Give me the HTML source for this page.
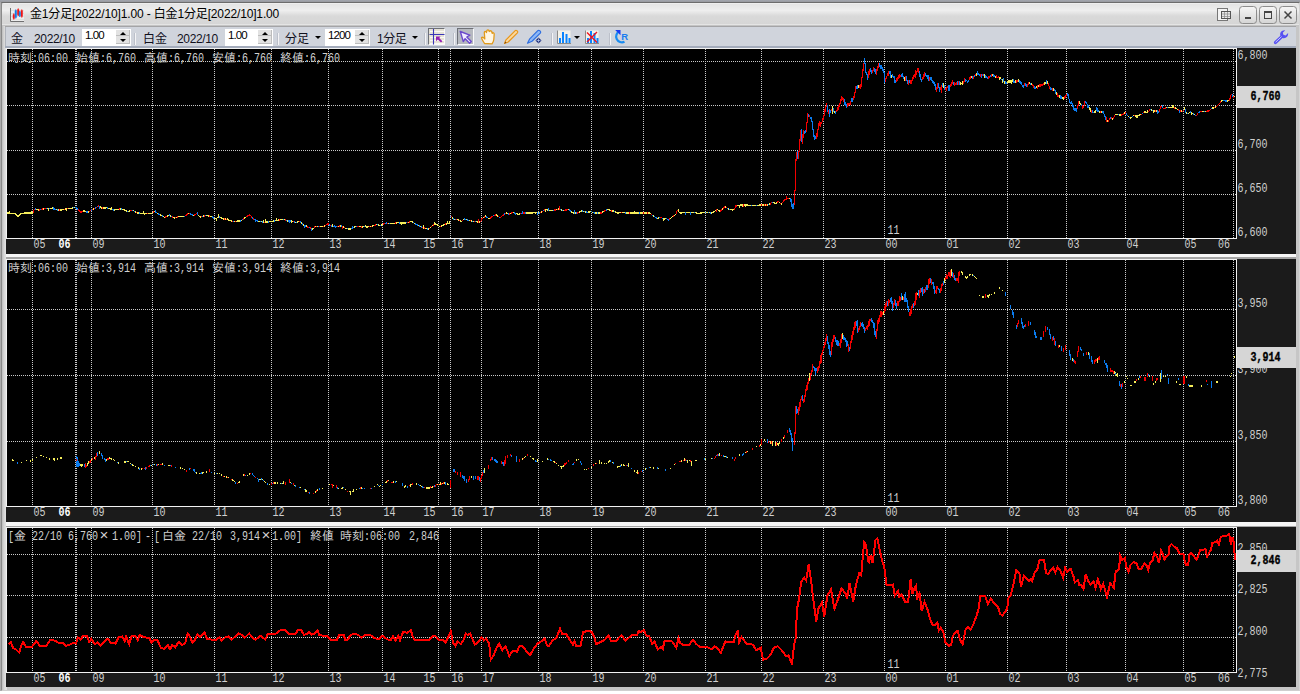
<!DOCTYPE html>
<html lang="ja">
<head>
<meta charset="utf-8">
<title>金1分足[2022/10]1.00 - 白金1分足[2022/10]1.00</title>
<style>
html,body{margin:0;padding:0}
body{width:1300px;height:694px;overflow:hidden;background:#fff;position:relative;font-family:"Liberation Sans","Noto Sans CJK JP",sans-serif;font-size:12px;color:#000}
.win{position:absolute;left:0;top:0;width:1300px;height:691px;background:linear-gradient(#a2a6ae,#9a9ca2 1.500px,#acacac 3px)}
.frame{position:absolute;left:1px;top:2px;width:1299px;height:689px;box-sizing:border-box;border:1px solid #8a8a8a;border-top-color:#6c6c6c;border-right-color:#d4d4d4;border-bottom-color:#cfcfcf;background:linear-gradient(90deg,#bcbcbc 0,#d6d6d6 2px,#e2e2e2 4px,#e2e2e2 5px,#c6c6c6 5px)}
.title{position:absolute;left:2px;top:3px;width:1297px;height:23px;background:linear-gradient(#f2f2f2 0,#e5e5e5 1.500px,#eeeeee 7.500px,#d9d9d9 13px,#d6d6d6 21px,#e4e4e4 21.500px,#e4e4e4 22px,#c4c4c4 22px);border-radius:2px 2px 0 0}
.title .cap{position:absolute;left:28px;top:4px;font-size:12px;line-height:15px;white-space:pre;color:#000;letter-spacing:-0.15px}
.tool{position:absolute;left:5px;top:26px;width:1291px;height:22px;background:#d0d4dc;border-top:1px solid #a4a4a6;box-shadow:inset 1px 0 0 #b0b4bc;box-sizing:border-box;border-bottom:2px solid #a3abbb}
.tool span,.tool i,.tool b{position:absolute}
.lb{top:5px;line-height:14px;font-size:12px;color:#10101c;white-space:pre}
.box{top:2px;height:17px;background:#fff}
.box em{position:absolute;left:3px;top:0;font-style:normal;font-size:11.5px;line-height:12px;color:#000;letter-spacing:-0.9px}
.sp{position:absolute;right:1px;top:1px;width:14px;height:15px}
.sp:before,.sp:after{content:"";position:absolute;left:0;width:14px;height:7px;background:#e2e2e2;box-shadow:inset -1px -1px 0 #bdbdbd}
.sp:before{top:0;height:6px}.sp:after{top:6px;height:8px}
.sp u{position:absolute;left:4px;width:0;height:0;border-left:3px solid transparent;border-right:3px solid transparent;z-index:2}
.sp u.u{top:1.500px;border-bottom:3px solid #000}
.sp u.d{top:8.500px;border-top:3px solid #000}
.sep{top:6px;width:1px;height:12px;background:#f4f4f6;box-shadow:-1px 0 0 #bcc0ca}
.dd{top:9px;width:0;height:0;border-left:3px solid transparent;border-right:3px solid transparent;border-top:3.500px solid #000}
.prs{top:1px;width:17px;height:17px;box-sizing:border-box;border:1px solid;border-color:#6e7178 #fafafa #fafafa #6e7178}
svg.ch{position:absolute;left:0;top:0}
svg.ic{position:absolute}
.t text{font-family:"Liberation Mono","IPAGothic",monospace;fill:#d0d0d0;white-space:pre}
.t .n{font-size:13px}
.t .j{font-size:12px}
.t .x{font-size:15px}
.t .b{font-weight:bold;fill:#fff}
.t .mk{font-size:13px;font-weight:bold;fill:#000;stroke:#000;stroke-width:.35px}
</style>
</head>
<body>
<div class="win"></div><div class="frame"></div>
<div class="title">
<svg class="ic" style="left:8px;top:5px" width="15" height="14" viewBox="0 0 15 14"><rect x="0.500" y="0" width="13.500" height="13.500" fill="#ececec"/><path d="M1 2.500H14M1 5.500H14M1 8.500H14M1 11.500H14" stroke="#dedede" stroke-width="1"/><path d="M0.500 0V13.500H14" stroke="#707070" fill="none"/><path d="M3.800 5.500L4.600 7V10L3.800 11.500L3 10V7ZM8.200 0.500L9 2V6.500L8.200 8L7.400 6.500V2ZM11.800 1.500L12.600 3V8L11.800 9.500L11 8V3Z" fill="#f01414" stroke="#f01414" stroke-width=".5"/><path d="M5.800 1.500L6.600 3V9L5.800 10.500L5 9V3ZM9.800 3L10.500 4.500V7.500L9.800 9L9.100 7.500V4.500Z" fill="#1478e6" stroke="#1478e6" stroke-width=".5"/></svg>
<span class="cap">金1分足[2022/10]1.00 - 白金1分足[2022/10]1.00</span>
<svg class="ic" style="left:1213px;top:3px" width="84" height="20" viewBox="0 0 84 20">
<rect x="2.5" y="2.500" width="10" height="12" fill="#f4f4f4" stroke="#777"/><rect x="6.500" y="5.500" width="9" height="7" fill="#e8e8e8" stroke="#555"/><path d="M7 8H15M7 10.500H15M9.500 6V12M12.500 6V12" stroke="#888" stroke-width=".7"/>
<g stroke="#8c8c8c" fill="url(#bg)"><rect x="24.500" y="0.500" width="17" height="17" rx="3"/><rect x="44.500" y="0.500" width="17" height="17" rx="3"/><rect x="64.500" y="0.500" width="17" height="17" rx="3"/></g>
<defs><linearGradient id="bg" x1="0" y1="0" x2="0" y2="1"><stop offset="0" stop-color="#f6f6f6"/><stop offset="1" stop-color="#d4d4d4"/></linearGradient></defs>
<path d="M30 12H36" stroke="#444" stroke-width="2"/><rect x="49.500" y="5.500" width="7" height="7" fill="none" stroke="#444"/><path d="M49 6H57" stroke="#444" stroke-width="2"/><path d="M69.500 5.500L76.500 12.500M76.500 5.500L69.500 12.500" stroke="#444" stroke-width="1.500"/>
</svg>
</div>
<div class="tool">
<span class="lb" style="left:6px">金</span><span class="lb" style="left:29px;letter-spacing:-0.35px">2022/10</span>
<span class="box" style="left:77px;width:49px"><em>1.00</em><i class="sp"><u class="u"></u><u class="d"></u></i></span>
<i class="sep" style="left:130px"></i>
<span class="lb" style="left:138px">白金</span><span class="lb" style="left:172px;letter-spacing:-0.35px">2022/10</span>
<span class="box" style="left:220px;width:48px"><em>1.00</em><i class="sp"><u class="u"></u><u class="d"></u></i></span>
<i class="sep" style="left:273px"></i>
<span class="lb" style="left:280px">分足</span><i class="dd" style="left:310px"></i>
<span class="box" style="left:320px;width:45px"><em>1200</em><i class="sp"><u class="u"></u><u class="d"></u></i></span>
<span class="lb" style="left:372px;letter-spacing:-0.5px">1分足</span><i class="dd" style="left:407px"></i>
<i class="sep" style="left:420px"></i>
<i class="prs" style="left:423px;background:#e6e2d6"></i>
<i class="sep" style="left:449px"></i>
<i class="prs" style="left:452px;background:#b6b9bf"></i>
<i class="sep" style="left:547px"></i>
<i class="dd" style="left:569px"></i>
<i class="sep" style="left:605px"></i>
<svg class="ic" style="left:420px;top:0" width="220" height="20" viewBox="425 27 220 20">
<!-- icon1 grid + arrow -->
<path d="M430 31.500H444M430 37.500H444M430 40.500H444M430 43.500H444" stroke="#fbfaf4" stroke-width="1"/>
<path d="M433.500 29V44.500M429.500 34.500H444.500" stroke="#3a36b8" stroke-width="1.100"/>
<path d="M436 36.600H440.600L439.200 38L442.400 41.200L441 42.600L437.800 39.400L436 41.200Z" fill="#9420b2"/>
<!-- icon2 pointer -->
<path d="M460.300 31.500L469.800 35.200L466.800 37L471.300 41.500L469.600 43.200L465.100 38.700L463.300 41.600Z" fill="#efeaff" stroke="#6a48cc" stroke-width="1.400" stroke-linejoin="round"/>
<!-- icon3 hand -->
<path d="M484.500 43.500C483 41 481.500 39 481.500 37.500C482.500 36.800 483.800 37.500 484.800 39L484.300 32.500C484.300 31 486.200 31 486.400 32.500L486.800 31C487 29.500 489 29.600 489 31.200L489.600 31.500C490 30.300 491.800 30.600 491.800 32L492.200 33.300C492.800 32.300 494.300 32.800 494.200 34.200L493.800 39.500C493.600 41.500 492.800 42.500 492 43.800Z" fill="#fff6e4" stroke="#e09a1c" stroke-width="1.300" stroke-linejoin="round"/>
<!-- icon4 pencil -->
<path d="M504.500 43.500L506 39.800L515.200 30.600C516.200 29.600 518.600 31.500 517.400 32.800L508.200 42Z" fill="#fbd9a0" stroke="#e8961a" stroke-width="1.200" stroke-linejoin="round"/><path d="M504.300 43.800L505.300 41.600L506.500 42.800Z" fill="#7a4a10"/>
<!-- icon5 pen -->
<path d="M527.500 43.200L529.500 39.200L537.800 30.700C539 29.500 541.600 31.700 540.300 33.100L532 41.300Z" fill="#8db8f6" stroke="#2f6fe0" stroke-width="1.200" stroke-linejoin="round"/><path d="M538.500 37.500L541.500 40.500L538.500 43.500L535.500 40.500Z" fill="#1a2a78"/><path d="M538.500 38.500V42.500M536.500 40.500H540.500" stroke="#cfe0ff" stroke-width=".6"/>
<!-- icon6 bars -->
<rect x="557.500" y="30.500" width="13" height="13" fill="#f3f1ea"/><path d="M557.500 30.500V43.500H571" stroke="#8a8a8a" fill="none"/><path d="M560 38V43M563 32V43M566.500 34V43M569.500 38V43" stroke="#0a84ff" stroke-width="2"/>
<!-- icon7 bars with X -->
<rect x="585.500" y="30.500" width="13" height="13" fill="#f3f1ea"/><path d="M585.500 30.500V43.500H599" stroke="#8a8a8a" fill="none"/><path d="M588 38V43M591 31V43M594.500 33V43M597.500 38V43" stroke="#0a84ff" stroke-width="2"/><path d="M587 32.500L597 42.500M597 32L587 42" stroke="#f01020" stroke-width="1.400"/>
<!-- icon8 refresh -->
<path d="M619.500 31.200A5.600 5.600 0 1 0 624.500 41.800" fill="none" stroke="#1a8cf0" stroke-width="2.200"/><path d="M615.200 30H620.500V35.300Z" fill="#1a3cf0"/>
<text x="621.200" y="40.300" font-family="Liberation Sans,sans-serif" font-weight="bold" font-size="9.500" fill="#1a7cf0">R</text>
</svg>
<svg class="ic" style="left:1267px;top:2px" width="18" height="17" viewBox="1272 29 18 17"><path d="M1274.200 41.400L1280.400 35.800C1279.400 32.800 1281.600 29.800 1285.200 30.200L1282.800 32.800L1283.400 34.800L1285.600 35.400L1288.100 33C1288.600 36.600 1285.400 39 1282.600 37.900L1276.400 43.800C1275 45 1273 43 1274.200 41.400Z" fill="#5650f2"/><path d="M1275.600 42.200L1281.600 36.600" stroke="#c8c6ff" stroke-width="1"/></svg>
</div>
<svg class="ch" width="1300" height="694" viewBox="0 0 1300 694">
<rect x="6" y="48" width="1290" height="639" fill="#f6f6f6"/>
<rect x="6" y="257" width="1290" height="2" fill="#a4a4a4"/><rect x="6" y="526" width="1290" height="1" fill="#a4a4a4"/>
<rect x="6" y="48" width="1290" height="206" fill="#1b1b1b"/>
<rect x="7" y="49" width="1229" height="189" fill="#000"/>
<path d="M6 48.5H1237M6.5 48V239M6 238.5H1237M1236.5 48V239" stroke="#f2f2f2" stroke-width="1" fill="none" shape-rendering="crispEdges"/>
<path d="M7 61.5H1236M7 105.5H1236M7 150.5H1236M7 194.5H1236M32.5 49V238M91.5 49V238M152.5 49V238M214.5 49V238M271.5 49V238M328.5 49V238M382.5 49V238M438.5 49V238M450.5 49V238M481.5 49V238M538.5 49V238M591.5 49V238M643.5 49V238M705.5 49V238M761.5 49V238M823.5 49V238M884.5 49V238M945.5 49V238M1007.5 49V238M1066.5 49V238M1125.5 49V238M1183.5 49V238M1233.5 49V238M75.5 49V238M76.5 49V238" stroke="#cacaca" stroke-width="1" stroke-dasharray="1 1" fill="none" shape-rendering="crispEdges"/>
<rect x="1237" y="86" width="59" height="22" fill="#d6d6d6"/>
<rect x="6" y="259" width="1290" height="263" fill="#1b1b1b"/>
<rect x="7" y="260" width="1229" height="246" fill="#000"/>
<path d="M6 259.5H1237M6.5 259V507M6 506.5H1237M1236.5 259V507" stroke="#f2f2f2" stroke-width="1" fill="none" shape-rendering="crispEdges"/>
<path d="M7 309.5H1236M7 375.5H1236M7 441.5H1236M32.5 260V506M91.5 260V506M152.5 260V506M214.5 260V506M271.5 260V506M328.5 260V506M382.5 260V506M438.5 260V506M450.5 260V506M481.5 260V506M538.5 260V506M591.5 260V506M643.5 260V506M705.5 260V506M761.5 260V506M823.5 260V506M884.5 260V506M945.5 260V506M1007.5 260V506M1066.5 260V506M1125.5 260V506M1183.5 260V506M1233.5 260V506M75.5 260V506M76.5 260V506" stroke="#cacaca" stroke-width="1" stroke-dasharray="1 1" fill="none" shape-rendering="crispEdges"/>
<rect x="1237" y="347" width="59" height="21" fill="#d6d6d6"/>
<rect x="6" y="527" width="1290" height="160" fill="#1b1b1b"/>
<rect x="7" y="528" width="1229" height="144" fill="#000"/>
<path d="M6 527.5H1237M6.5 527V673M6 672.5H1237M1236.5 527V673" stroke="#f2f2f2" stroke-width="1" fill="none" shape-rendering="crispEdges"/>
<path d="M7 554.5H1236M7 595.5H1236M7 637.5H1236M32.5 528V672M91.5 528V672M152.5 528V672M214.5 528V672M271.5 528V672M328.5 528V672M382.5 528V672M438.5 528V672M450.5 528V672M481.5 528V672M538.5 528V672M591.5 528V672M643.5 528V672M705.5 528V672M761.5 528V672M823.5 528V672M884.5 528V672M945.5 528V672M1007.5 528V672M1066.5 528V672M1125.5 528V672M1183.5 528V672M1233.5 528V672M75.5 528V672M76.5 528V672" stroke="#cacaca" stroke-width="1" stroke-dasharray="1 1" fill="none" shape-rendering="crispEdges"/>
<rect x="1237" y="550" width="59" height="22" fill="#d6d6d6"/>
<path d="M7.5 212.4V213.8M8.5 212.4V213.8M9.5 211.1V213.9M10.5 212.5V213.9M11.5 212.6V214M12.5 212.6V214M13.5 212.7V214.1M14.5 212.8V214.2M15.5 213.3V214.7M16.5 214.1V215.5M17.5 214.8V217.3M18.5 215.2V216.6M19.5 214.3V215.7M20.5 213.2V214.6M21.5 212.6V214M22.5 212.6V214M23.5 212.5V213.9M24.5 212.4V213.8M25.5 212.3V213.7M26.5 212.3V213.7M27.5 212.2V213.6M28.5 212.1V213.5M29.5 212.1V213.5M30.5 212.2V213.6M31.5 210.8V213.6M32.5 212.3V213.7M36.5 208.7V210.1M37.5 209V210.4M38.5 209.2V210.6M43.5 208.1V209.5M47.5 207.6V209M48.5 207.6V211.1M50.5 207.7V209.1M51.5 207.8V209.2M52.5 206.8V209.3M56.5 208.8V210.2M58.5 209.2V210.6M60.5 209.1V210.5M61.5 209.1V210.5M62.5 208.9V210.3M63.5 208.7V210.1M65.5 208.2V209.6M66.5 208.1V211M68.5 207.9V209.3M69.5 207.8V209.2M70.5 207.7V209.1M71.5 207.6V209M72.5 207.4V208.8M74.5 206.6V208M83.5 210.3V211.7M84.5 210.4V211.8M85.5 210.8V212.2M88.5 211.1V212.5M93.5 208.2V209.6M100.5 206.4V207.8M101.5 207.2V208.6M103.5 207.3V208.7M104.5 207.2V208.6M105.5 207.1V208.5M106.5 207V208.4M108.5 207.5V208.9M109.5 207.8V209.2M110.5 208.2V209.6M111.5 207.1V209.9M114.5 209.2V210.6M115.5 209V210.4M116.5 208.9V210.3M117.5 208.7V210.1M118.5 208.6V210M120.5 208.3V209.7M122.5 208.5V209.9M123.5 209V210.4M124.5 209.4V210.8M125.5 209.8V211.2M126.5 210.3V211.7M128.5 210.5V211.9M129.5 210.2V211.6M133.5 210V211.4M135.5 211.2V212.6M137.5 212.2V213.6M138.5 212.3V213.7M140.5 212.6V214M141.5 212.7V214.1M142.5 212.8V214.2M143.5 211.4V214.4M144.5 213.1V214.5M145.5 213V214.4M146.5 212.9V214.3M148.5 212.7V214.1M149.5 212.7V214.1M150.5 212.6V214M151.5 212.5V213.9M152.5 212V213.4M154.5 210.9V212.3M157.5 212.5V213.9M160.5 214.2V215.6M161.5 214.8V216.2M163.5 216V217.4M164.5 216.5V217.9M167.5 215.4V216.8M168.5 215V216.4M170.5 215.3V216.7M173.5 216.8V218.2M174.5 217.1V218.5M176.5 216.6V218M178.5 215.8V217.2M179.5 215.5V216.9M180.5 215.6V217M181.5 215.6V217M182.5 215.7V217.1M183.5 215.7V217.1M188.5 212.6V214M193.5 214.5V215.9M198.5 214.5V215.8M199.5 215.6V217M200.5 216.1V217.5M203.5 215.4V216.8M206.5 214.8V216.2M207.5 214.9V216.3M208.5 215.1V216.5M210.5 215.5V216.9M211.5 215.9V217.3M214.5 217.7V219.1M215.5 218V219.4M216.5 217.5V220.8M217.5 216.9V218.3M218.5 214.4V217.6M220.5 216.6V218M221.5 217.3V218.7M222.5 217.9V219.3M223.5 218.3V219.7M225.5 217.5V219.9M227.5 217.9V220.2M228.5 219.1V220.5M229.5 219.5V220.9M230.5 219.9V221.3M231.5 220.2V221.6M234.5 220.7V222.1M236.5 220.5V221.9M237.5 220.4V221.8M238.5 220.3V221.7M239.5 220.2V221.6M241.5 219.6V221M244.5 216.6V218.8M245.5 216.7V218.1M258.5 220.5V221.9M259.5 220.6V222M261.5 221V222.4M263.5 219.6V222.8M265.5 219.4V222.9M266.5 221.4V222.8M267.5 221.3V222.7M269.5 221V222.4M270.5 220.9V222.3M271.5 220.8V222.2M272.5 220.6V222M273.5 220.4V221.8M275.5 219.9V221.3M276.5 218.4V221.1M277.5 219.5V220.9M278.5 219.3V220.7M280.5 219V220.4M281.5 218.8V220.2M282.5 218.7V220.1M284.5 218.8V220.2M287.5 220.1V221.5M291.5 220.4V223.2M292.5 220.6V222M295.5 221.5V222.9M297.5 221.2V222.6M298.5 220.9V222.3M301.5 222.2V223.6M303.5 224.3V225.7M306.5 224.5V227.1M312.5 228.3V229.7M313.5 228V229.4M315.5 226V227.4M317.5 225.6V227M320.5 225.8V227.2M321.5 225.8V227.2M322.5 225.9V227.3M324.5 225.1V226.5M332.5 223.7V226.8M338.5 225.5V226.9M340.5 225.1V226.5M343.5 225.6V227.9M345.5 227.5V228.9M346.5 227.9V229.3M348.5 228.2V229.6M349.5 228.3V229.7M350.5 228.4V229.8M354.5 226.1V227.5M355.5 226V227.4M359.5 225.6V227M360.5 225.5V226.9M362.5 225.7V228M363.5 225.8V227.2M365.5 225.1V227.4M366.5 226.1V227.5M367.5 226.2V227.6M368.5 226V227.4M370.5 225.6V227M372.5 225.3V226.7M373.5 225V226.4M376.5 223.7V225.1M378.5 224.2V225.6M379.5 224.8V226.1M381.5 224.3V225.7M382.5 223.9V225.3M388.5 222.6V224M390.5 222.8V224.2M391.5 222.9V224.3M392.5 223V224.4M393.5 223V224.4M394.5 222.8V224.2M396.5 222.1V223.5M397.5 221.8V223.2M398.5 221.8V223.2M400.5 222.3V223.7M401.5 222.2V224.7M402.5 222.2V223.6M403.5 222.2V223.6M404.5 222.2V223.6M405.5 222.1V223.5M408.5 221.5V222.9M410.5 221V222.4M411.5 220.9V222.3M412.5 221.4V222.8M414.5 222.5V223.9M418.5 224.7V226.1M420.5 225.7V227.1M423.5 225V228.5M425.5 227.7V229.1M426.5 228V229.4M428.5 228.2V229.6M430.5 226.5V227.9M432.5 225V226.4M434.5 221.9V225.3M435.5 223.4V224.8M436.5 223.5V224.8M437.5 224.2V225.5M438.5 224.9V226.2M439.5 225.6V226.9M441.5 225.2V226.6M442.5 224.7V226.1M443.5 224.3V225.7M444.5 223.8V225.2M446.5 223.1V224.5M447.5 221.3V224.4M448.5 222.9V224.3M449.5 221.4V224.3M452.5 217.1V218.5M454.5 218.6V220M457.5 218.9V220.3M458.5 219.2V220.6M460.5 220.3V221.7M461.5 220.5V221.9M463.5 218.7V220.1M466.5 219V220.4M469.5 219.7V221.1M471.5 220.2V221.6M473.5 220.7V222.1M476.5 221V222.4M477.5 221.1V222.5M479.5 221.3V222.7M483.5 216.8V218.2M485.5 215.2V217.4M488.5 217.7V219.1M489.5 217.8V219.2M496.5 214.3V215.7M497.5 215.1V216.5M506.5 212.3V213.7M507.5 212.8V214.2M510.5 212.8V214.2M513.5 212V213.4M516.5 213V214.4M517.5 213.3V214.7M518.5 213.5V214.9M519.5 213.3V214.7M526.5 212.2V213.6M527.5 212.2V213.6M528.5 212.2V213.6M529.5 212.3V213.7M530.5 212.3V213.7M531.5 212.2V213.6M532.5 212.1V213.5M533.5 212V213.4M534.5 211.9V213.3M535.5 211.8V214.1M536.5 211.7V213.1M538.5 212V213.3M541.5 211.2V212.6M545.5 208.7V212M546.5 209V210.4M547.5 209.4V210.8M549.5 210V211.4M550.5 209.9V211.3M551.5 209.8V211.2M552.5 209.7V211.1M556.5 208.9V210.3M558.5 208.1V209.5M561.5 209.2V210.6M563.5 210V211.4M568.5 208.7V210.1M571.5 211.3V212.7M572.5 212V213.4M573.5 212.2V213.6M575.5 212.2V213.6M579.5 211.1V212.5M580.5 210.6V212M581.5 210.2V211.6M583.5 210.6V212M585.5 211.1V212.5M588.5 211.4V212.8M589.5 211.2V212.6M590.5 211V212.4M592.5 211.5V212.9M595.5 212.3V213.7M596.5 212.3V213.7M598.5 212.3V213.7M599.5 212.3V213.7M602.5 211.1V212.5M603.5 210.6V212M607.5 208.9V210.3M608.5 208.7V210.1M609.5 209.2V210.6M610.5 209.8V211.2M612.5 210.3V211.7M613.5 210.4V211.8M615.5 211.2V212.6M616.5 211.9V213.3M617.5 212.2V213.6M618.5 212.1V213.5M619.5 211.9V213.3M620.5 211.8V213.2M622.5 211.7V213.1M623.5 211.9V213.3M624.5 212V213.4M626.5 212.2V213.6M627.5 212.3V213.7M628.5 212.3V213.7M630.5 212.3V213.7M631.5 212.3V213.7M632.5 212.3V213.7M633.5 212.3V213.7M634.5 211.1V213.7M635.5 212.3V213.7M636.5 212.3V213.7M637.5 212.3V213.7M638.5 212.3V213.7M640.5 212.3V213.7M641.5 212.3V213.7M642.5 212.3V213.7M644.5 212.3V213.7M645.5 212.3V213.7M646.5 212.3V213.7M648.5 212.3V213.7M649.5 212.3V213.7M650.5 212.8V214.2M653.5 215.4V216.8M657.5 217.5V218.9M658.5 217.4V218.8M663.5 218.4V220.6M664.5 218.1V219.5M665.5 217.5V218.9M670.5 217.5V218.9M671.5 216.5V217.9M672.5 215.7V217.1M674.5 214.5V215.9M675.5 213.9V215.3M678.5 209.1V212M679.5 211.7V213.1M680.5 212.2V213.6M681.5 212.1V213.5M682.5 212V213.4M683.5 211.9V213.3M684.5 211.8V213.2M686.5 211.6V213M687.5 211.6V213M688.5 211.6V213M689.5 211.6V213M691.5 211.6V213M692.5 211.6V213M693.5 211.6V213M695.5 212V213.4M696.5 212.2V213.6M697.5 212.5V213.9M698.5 212.6V214M699.5 212.5V213.9M700.5 212.3V213.7M701.5 212.2V213.6M702.5 212V213.4M703.5 211.8V213.2M704.5 211.7V213.1M706.5 211.8V213.2M707.5 211.9V213.3M709.5 212V213.4M711.5 212.2V213.6M712.5 212V213.4M713.5 211.3V212.7M714.5 210.5V211.9M715.5 209.7V211.1M717.5 208.9V210.3M718.5 209.7V211M719.5 210.4V211.8M722.5 208.1V209.5M725.5 206.4V207.8M728.5 208.1V209.5M730.5 208.6V210M731.5 208.8V210.1M732.5 208.9V211.1M733.5 208.8V210.2M737.5 204.7V206.1M738.5 204.6V206M739.5 204.5V207.6M740.5 204.4V205.8M741.5 204.3V205.7M742.5 204.2V206.5M744.5 204.3V205.7M745.5 204.3V207M746.5 204.4V205.8M747.5 204.4V205.8M748.5 204.5V205.9M749.5 204.5V205.9M750.5 204.5V205.9M752.5 204.6V206M753.5 204.7V206.1M754.5 204.7V206.1M755.5 204.6V206M757.5 204.5V205.9M758.5 204.5V205.9M759.5 204.4V205.8M760.5 204.4V205.8M762.5 204.3V205.7M763.5 204.3V205.7M765.5 204.3V205.7M767.5 204.2V205.6M769.5 203.1V204.5M773.5 201.9V203.3M774.5 202.4V203.8M775.5 202.6V204M776.5 202.1V203.5M779.5 201.7V203.1M781.5 203.1V204.5M789.5 198V199.4M832.5 106V113.6M834.5 110.6V112.8M858.5 84.7V87.8M891.5 74.7V77.6M904.5 77.1V81.2M943.5 82.6V87.9M960.5 81.7V84.6M961.5 82.6V84.4M962.5 80.9V84.6M971.5 75.5V77.8M976.5 72.8V75.6M984.5 73.9V77.6M992.5 74.1V76.3M995.5 76.1V78.4M999.5 76.5V79.6M1000.5 77.2V79.4M1002.5 79.4V83.4M1004.5 80.8V83.6M1007.5 81V83.4M1008.5 80V82.7M1009.5 79.7V82.7M1010.5 80V82.6M1011.5 80.2V83.7M1012.5 79.4V81.8M1015.5 80.3V83M1018.5 79.2V81.9M1029.5 81.6V83.9M1031.5 83V85.4M1036.5 86.2V88.1M1038.5 85V86.5M1044.5 82.3V84.6M1045.5 81.6V83.5M1047.5 81.3V83.8M1053.5 88.3V91M1056.5 91.6V95.1M1059.5 95.2V98.1M1062.5 97.2V98.7M1063.5 97.2V99.5M1079.5 101.3V103.5M1080.5 102.5V105M1089.5 106.9V109.8M1090.5 108.3V111.9M1094.5 111V113.2M1095.5 109.8V112.8M1099.5 110.6V113M1101.5 110.9V112.5M1107.5 119.7V122.4M1112.5 118.1V119.5M1115.5 114V115.4M1116.5 113.7V115.1M1117.5 113.9V115.3M1119.5 114.1V115.5M1120.5 114.1V115.5M1124.5 112.4V113.8M1128.5 115.7V117.1M1130.5 117.3V118.7M1131.5 116.7V118.1M1133.5 115V116.4M1135.5 114.7V117.2M1136.5 114.7V118.1M1137.5 114.7V118.1M1138.5 114.6V116M1139.5 114.3V115.7M1140.5 114V115.4M1144.5 111.3V112.7M1145.5 111.4V112.8M1146.5 111.6V113M1147.5 109.7V113M1151.5 109.2V110.6M1153.5 110.1V112.6M1154.5 110.1V111.5M1156.5 110.1V111.5M1166.5 106.7V108.1M1168.5 106.6V108M1169.5 106.6V108M1170.5 106.6V108M1171.5 106.7V108.1M1172.5 105.3V108.2M1173.5 105.1V108.4M1175.5 107.4V108.8M1176.5 107.9V109.3M1177.5 108.5V109.9M1181.5 110.3V111.7M1184.5 106.8V109.5M1186.5 112.2V113.6M1188.5 112.6V114M1189.5 111.9V113.3M1191.5 111.9V115.1M1192.5 112.6V114M1194.5 114V115.4M1202.5 110.6V112M1203.5 110.6V112M1205.5 110.6V112M1212.5 107.4V108.8M1213.5 107.1V108.5M1215.5 106.3V107.7M1221.5 100.3V101.7M1222.5 99.5V100.9M1227.5 100.2V101.6M1228.5 99.9V101.3M1234.5 95.7V97.1" stroke="#f4ec5a" stroke-width="1" fill="none" shape-rendering="crispEdges"/>
<path d="M35.5 208.4V209.8M40.5 208.8V210.2M46.5 207.5V208.9M49.5 207.7V209.1M53.5 207.3V209.5M54.5 208.3V209.7M55.5 208.6V210M57.5 209.1V210.5M73.5 207V208.4M75.5 206.6V207.9M76.5 206.5V208.7M77.5 208.3V209.7M86.5 211.1V212.5M87.5 211.4V212.8M91.5 209.3V210.7M95.5 207.1V208.5M97.5 205.9V207.3M99.5 205.5V209M107.5 207.2V208.6M112.5 208.9V210.3M113.5 209.1V210.5M121.5 208.2V209.6M127.5 210.6V212M132.5 209.6V211M134.5 210.6V212M139.5 212.4V213.8M155.5 209.7V212.8M156.5 212V213.4M158.5 213.1V214.5M159.5 213.6V215M162.5 215.4V216.8M169.5 213.8V216.3M171.5 215.8V217.2M184.5 215.6V217M190.5 213.3V214.7M191.5 213.7V215.1M192.5 214.1V215.5M197.5 212.1V214.7M202.5 215.6V217M205.5 214.9V216.3M212.5 215.5V217.9M213.5 217.1V218.5M219.5 216.1V217.5M233.5 220.8V222.2M240.5 220.1V221.5M242.5 218.8V220.2M252.5 217.2V218.6M254.5 218.6V220M255.5 219.1V221.5M256.5 219.7V221.1M257.5 220.1V221.5M260.5 220.8V222.2M262.5 221.2V222.6M268.5 221.1V222.5M274.5 220.2V221.6M283.5 218.6V220M286.5 219.9V221.2M288.5 220.2V221.6M289.5 220.3V222.5M290.5 220.4V221.8M294.5 221.2V222.6M296.5 221.5V222.9M300.5 221.1V222.5M302.5 223.3V224.7M304.5 225V227.9M305.5 225.4V226.8M309.5 227V228.4M311.5 227.8V230.7M318.5 225.6V227M329.5 224.1V225.5M331.5 225.1V226.5M333.5 225.7V227.1M334.5 224.8V227.3M335.5 226.1V227.5M336.5 226V227.4M341.5 225.4V226.8M347.5 228V229.4M351.5 228V229.4M352.5 226.1V228.6M353.5 226.5V227.9M356.5 225.9V227.3M364.5 225.9V227.3M377.5 223.8V225.1M380.5 224.8V226.2M385.5 222.5V223.9M386.5 222.4V223.8M389.5 222.7V224.1M399.5 222.1V223.5M406.5 222V223.4M413.5 221.9V223.3M415.5 223.1V224.5M416.5 223.6V225M417.5 224.2V225.6M419.5 225.2V226.6M421.5 226.2V227.6M427.5 228.2V229.6M450.5 215.5V216.9M453.5 218.1V219.5M455.5 218.6V220M464.5 218.4V219.8M465.5 218.7V220.1M467.5 219.2V220.6M468.5 219.5V220.9M472.5 220.5V221.9M475.5 220.9V222.3M486.5 216.2V217.6M487.5 216.9V218.3M493.5 214.9V216.3M499.5 216.6V218M504.5 213.3V214.7M508.5 213.3V214.7M514.5 212.3V213.7M515.5 212.6V215.3M521.5 212.6V214M522.5 211.1V213.7M525.5 212.2V213.6M537.5 211.7V214.9M539.5 212.2V213.6M543.5 209.8V211.2M548.5 207.9V211.2M553.5 209.5V210.9M560.5 208.6V210M562.5 209.8V211.2M569.5 209.4V210.8M570.5 210.4V211.8M574.5 210.1V213.6M576.5 212.3V213.7M582.5 210.3V211.7M584.5 210.8V212.2M586.5 211.3V212.7M587.5 211.5V212.9M591.5 211V212.4M593.5 212V213.4M594.5 212.3V213.7M597.5 212.3V213.7M606.5 209.3V210.7M614.5 210.6V212M625.5 212.1V213.5M639.5 212.3V213.7M652.5 214.7V216.1M654.5 216V217.4M655.5 216.5V217.9M656.5 217.1V218.5M659.5 216.9V218.3M662.5 217.7V219.1M666.5 218V219.4M667.5 218.7V220.1M668.5 219.1V220.5M685.5 211.7V214.8M690.5 211.6V214.8M694.5 211.8V213.2M705.5 211.7V213.1M708.5 212V213.4M710.5 212.1V213.5M727.5 207.5V208.9M729.5 208.5V209.9M751.5 204.6V206M756.5 204.6V206M768.5 203.8V205.2M772.5 201.5V202.9M790.5 197.6V201.5M791.5 198.5V206.5M792.5 204V208.5M793.5 202.6V208.8M797.5 151.4V158.6M801.5 129.3V142.2M804.5 130.6V133.6M805.5 130.1V133.3M808.5 113.9V117.4M810.5 116.6V119M811.5 116.5V121.7M812.5 120.8V129.7M813.5 128.5V137.3M814.5 134.5V139.6M815.5 136.4V139.1M827.5 105.4V112.2M829.5 109.2V117M830.5 109.9V112.8M833.5 108.3V112.3M835.5 110.8V113.9M844.5 99V105.4M845.5 101.9V105.7M846.5 103.5V107.8M851.5 98.2V101.9M852.5 97.8V102.3M856.5 86.4V89.2M857.5 85.2V89.1M864.5 57.8V64.4M865.5 63.3V73.1M866.5 72.1V75.1M867.5 73.6V79.7M870.5 68.3V72M871.5 69.9V73.8M874.5 68.3V72.3M875.5 68.7V73.9M879.5 62.7V66.5M880.5 65V68.5M881.5 65.2V69.2M882.5 67.4V71.2M883.5 68.8V72.9M884.5 72.2V82.6M889.5 71.3V73.9M890.5 71.4V77.6M892.5 73.7V77M893.5 75.7V77.6M894.5 76.2V82.5M895.5 80.1V83.2M901.5 73.8V77.1M902.5 73V77.2M903.5 76.1V79.2M906.5 75.5V81.3M907.5 79.9V83.8M909.5 80.1V82.9M919.5 71.2V76.7M920.5 74.1V80.3M921.5 78.6V82.1M925.5 72.6V76.1M926.5 74.6V77.2M927.5 75V79.3M928.5 74.6V81.4M930.5 76.7V79.6M931.5 76.8V80.7M932.5 80.4V83.1M933.5 80.9V84M934.5 81.7V86.1M935.5 84.2V89.6M938.5 83V88M939.5 87.1V92.2M942.5 83V87.3M944.5 84.5V89.5M948.5 85.4V90.6M949.5 84.8V90.9M953.5 81.9V85.4M957.5 80.6V84.6M959.5 80.7V84.5M965.5 79.1V81.9M966.5 79.6V81.2M967.5 80.6V82.6M968.5 79.6V82.1M972.5 75.7V78.5M974.5 74.7V76.7M977.5 70.5V74.5M978.5 72.7V74.8M979.5 74.1V76M981.5 74.4V77.5M983.5 73.7V75.8M985.5 75.1V77.6M986.5 75.7V77.9M987.5 76.6V78.6M990.5 74.7V77.2M993.5 74V76.9M994.5 74.9V77.4M1001.5 78.6V80.2M1003.5 78.3V82.4M1005.5 80.6V83.7M1006.5 81.8V84M1013.5 79.4V83.3M1014.5 80.8V82.7M1019.5 80.2V82.6M1020.5 81.3V84.3M1021.5 82.4V85.1M1022.5 84.6V87.1M1023.5 84.7V87.8M1025.5 83.4V86.2M1026.5 84.1V86.7M1030.5 82.8V85M1034.5 86.4V89.3M1035.5 86.9V89.2M1046.5 80V84.2M1050.5 87.3V89.8M1051.5 87.7V89.5M1054.5 88.9V91.4M1055.5 90.2V94M1060.5 95V98.9M1061.5 96.4V98.7M1067.5 92.7V96.1M1068.5 94.3V99.4M1069.5 98.8V103.1M1070.5 101.7V104.2M1071.5 101V104M1072.5 103.1V107.4M1073.5 105.3V109.7M1074.5 108.3V111.3M1075.5 108.3V110.9M1076.5 108.1V111.8M1081.5 103.8V105.9M1085.5 100.7V103.1M1086.5 101.6V104.3M1087.5 103.5V108M1088.5 105V107.6M1092.5 110.3V113.3M1093.5 111.5V113.4M1096.5 107.4V111.1M1097.5 107.7V112M1098.5 109.9V111.8M1102.5 111V113M1103.5 111.4V114.2M1104.5 113.7V117M1105.5 116.2V120.2M1110.5 117.1V118.5M1118.5 114V115.4M1126.5 113.4V114.8M1127.5 114.6V116M1129.5 116.7V118.1M1132.5 115.8V117.2M1142.5 112.9V114.3M1150.5 108.6V110M1152.5 109.8V111.2M1157.5 110.4V114M1158.5 110.9V113.4M1162.5 104.9V108.1M1167.5 106.6V108M1179.5 109.8V113M1185.5 109V112.6M1187.5 112.7V114.1M1190.5 111.4V112.8M1193.5 113.3V114.7M1195.5 114.8V116.2M1198.5 112V113.4M1199.5 111.1V112.5M1204.5 110.6V112M1211.5 107.8V109.2M1223.5 99.5V100.9M1224.5 100V101.4M1225.5 100.4V101.8M1226.5 100.4V101.8M1232.5 93.7V97.1" stroke="#0a7cf0" stroke-width="1" fill="none" shape-rendering="crispEdges"/>
<path d="M33.5 210.4V213M34.5 208.9V210.4M39.5 209.1V210.5M41.5 208.6V210M42.5 208.3V209.7M44.5 207.9V209.3M45.5 207.6V209M59.5 209.2V210.6M64.5 208.5V209.9M67.5 208V209.4M78.5 209.3V210.7M79.5 210.3V211.7M80.5 211.2V212.6M81.5 211.3V212.7M82.5 210.8V212.2M89.5 210.5V211.9M90.5 209.9V211.3M92.5 208.7V210.1M94.5 207.6V209M96.5 206.5V207.9M98.5 205.4V206.8M102.5 207.4V208.8M119.5 208.4V209.8M130.5 209.9V211.3M131.5 209.6V211M136.5 211.8V213.2M147.5 212.8V214.2M153.5 211.1V212.5M165.5 216.3V217.7M166.5 215.9V217.3M172.5 216.3V217.7M175.5 216.9V218.3M177.5 216.2V217.6M185.5 215V216.4M186.5 214.1V215.5M187.5 213.3V214.7M189.5 212.8V214.2M194.5 214.3V215.7M195.5 213.6V215M196.5 213V214.4M201.5 215.8V217.2M204.5 215.1V216.5M209.5 215.3V216.7M224.5 218.4V219.8M226.5 218.6V220M232.5 220.6V222M235.5 220.6V222M243.5 218.1V219.5M246.5 216V217.4M247.5 215.3V216.7M248.5 214.6V216M249.5 214.2V215.6M250.5 215V216.4M251.5 216.1V217.5M253.5 218.1V219.5M264.5 221.5V222.9M279.5 219.1V220.5M285.5 219.4V220.8M293.5 220.9V222.3M299.5 220.6V222M307.5 226.1V227.5M308.5 226.5V227.9M310.5 227.4V228.8M314.5 225.7V228.4M316.5 225.5V226.9M319.5 225.7V227.1M323.5 225.6V227M325.5 224.5V225.9M326.5 223.9V225.3M327.5 222.5V224.8M328.5 223.1V224.5M330.5 224.8V226.2M337.5 225.7V227.1M339.5 225.3V226.7M342.5 225.9V228.7M344.5 227V228.4M357.5 225.8V227.2M358.5 225.7V227.1M361.5 225.6V228.1M369.5 225.8V227.2M371.5 225.5V226.9M374.5 224.7V226.1M375.5 224.2V225.6M383.5 223.4V224.8M384.5 223V224.4M387.5 222.5V223.9M395.5 222.4V223.8M407.5 221.7V223.1M409.5 221.3V222.7M422.5 226.7V228.1M424.5 227.4V228.8M429.5 227.5V228.9M431.5 225.6V227M433.5 224.4V225.8M440.5 225.7V227.1M445.5 223.3V224.7M451.5 216V217.4M456.5 218.7V220.1M459.5 219.7V221.1M462.5 219.7V221.1M470.5 220V221.4M474.5 220.9V222.3M478.5 219.2V222.6M480.5 220.6V222M481.5 218.3V220.6M482.5 217.7V219.1M484.5 216.4V217.8M490.5 217.1V218.5M491.5 216.3V217.7M492.5 215.5V216.9M494.5 214.5V215.9M495.5 214.1V215.5M498.5 215.8V217.2M500.5 216.6V218M501.5 215.8V217.2M502.5 215V216.4M503.5 214.1V215.5M505.5 212.5V213.9M509.5 213.3V214.7M511.5 212.1V213.5M512.5 211.7V213.1M520.5 212.9V214.3M523.5 212.1V213.5M524.5 212.1V213.5M540.5 211.9V213.3M542.5 210.5V211.9M544.5 209.1V210.5M554.5 209.4V210.8M555.5 209.2V210.6M557.5 208.5V209.9M559.5 206.1V209.5M564.5 209.7V211.1M565.5 209.4V210.8M566.5 209.1V210.5M567.5 208.8V210.2M577.5 212.1V213.5M578.5 211.6V213M600.5 212.1V213.5M601.5 211.6V214.3M604.5 210.2V211.6M605.5 209.7V211.1M611.5 210.2V211.6M621.5 211.6V213M629.5 212.3V213.7M643.5 212.3V213.7M647.5 212.3V213.7M651.5 213.9V215.3M660.5 216.5V217.9M661.5 216.8V218.2M669.5 218.4V219.8M673.5 215.1V216.5M676.5 211.2V214.3M677.5 210V211.4M716.5 208.9V212.2M720.5 210.3V211.7M721.5 209.2V210.6M723.5 207.1V208.5M724.5 206.3V207.7M726.5 207V208.4M734.5 208.1V209.5M735.5 204.9V208.1M736.5 205.4V206.8M743.5 204.2V206.9M761.5 204.3V205.7M764.5 204.3V205.7M766.5 204.3V205.7M770.5 202.5V205.4M771.5 201.8V203.2M777.5 201.4V202.8M778.5 201V202.4M780.5 202.6V204M782.5 201.8V203.4M783.5 200.4V201.8M784.5 199.4V200.8M785.5 198.9V200.3M786.5 196.3V199.8M787.5 198V199.3M788.5 197.6V199M794.5 189.7V205.4M795.5 159.4V191.2M796.5 151.9V160.9M798.5 151.4V159.2M799.5 139.4V152M800.5 129.5V141.4M802.5 133.8V143.9M803.5 130V137.7M806.5 121.8V132.3M807.5 113.3V123M809.5 115.1V117M816.5 133.1V138.6M817.5 128.8V136.8M818.5 123.1V130.1M819.5 121V125.5M820.5 122.4V126.7M821.5 121.8V123.9M822.5 117.5V122.2M823.5 114.8V119.9M824.5 109.1V115.5M825.5 105.5V111.5M826.5 103.2V106.6M828.5 109.8V113.5M831.5 108.6V111.2M836.5 109.6V112.2M837.5 106.5V111.3M838.5 104.7V109.7M839.5 102.9V106.7M840.5 99.1V104M841.5 96.2V101.1M842.5 97.3V99.8M843.5 98.4V101.9M847.5 102.8V106.8M848.5 103.1V106.2M849.5 102.6V104.7M850.5 100.5V104.5M853.5 96.2V100.2M854.5 92.2V97.6M855.5 85.5V93.3M859.5 84.6V87.7M860.5 83.6V88.9M861.5 76.7V86.8M862.5 69V78.1M863.5 62.6V71.3M868.5 71.2V78M869.5 68.9V75M872.5 69.9V73.1M873.5 66.5V71M876.5 69.3V75M877.5 65.8V71.4M878.5 63.4V67.9M885.5 77.9V82M886.5 75.6V78.6M887.5 72.5V76.1M888.5 70.8V75.7M896.5 78.3V82.2M897.5 77V81.4M898.5 75.4V78.8M899.5 73.7V77.7M900.5 74.7V77.4M905.5 75.6V80.5M908.5 79.9V84.7M910.5 79.6V84.2M911.5 80V83.9M912.5 77.3V81M913.5 74.7V78.9M914.5 74.1V76.8M915.5 70.2V77.7M916.5 71.1V74.6M917.5 68.1V72M918.5 67.6V73.3M922.5 76.5V79.8M923.5 73.7V78.8M924.5 72V76.7M929.5 77V80.6M936.5 87.3V92.3M937.5 83V88.6M940.5 87.3V90.4M941.5 85.3V92.9M945.5 87.8V90.4M946.5 86.8V91M947.5 86.3V88.3M950.5 84.4V86.6M951.5 82.3V86.4M952.5 79.9V84.1M954.5 82.2V85.8M955.5 82.5V85M956.5 82V85M958.5 80.8V84.7M963.5 81.1V83.7M964.5 78.4V82.4M969.5 77.4V80.3M970.5 76.2V79.3M973.5 75.7V79M975.5 73.8V75.6M980.5 74.2V76.5M982.5 74.1V75.7M988.5 76.3V79.4M989.5 76.1V78.2M991.5 74.2V76.8M996.5 75.3V78.3M997.5 76.7V78.3M998.5 76.3V78.4M1016.5 79.9V83.3M1017.5 79.7V81.7M1024.5 83.2V86.4M1027.5 84V86.6M1028.5 82.1V85.2M1032.5 84V86.4M1033.5 85.2V87.8M1037.5 85.1V88.8M1039.5 84.3V86.8M1040.5 84V87.3M1041.5 83.8V86M1042.5 83.7V85.8M1043.5 83V84.7M1048.5 82.9V85.7M1049.5 86.3V89.1M1052.5 87.5V90.5M1057.5 93.3V96.5M1058.5 94.5V96.7M1064.5 96.3V98.8M1065.5 94.7V97.5M1066.5 93.8V96.3M1077.5 104.7V108.8M1078.5 101.3V105.9M1082.5 105.4V108.8M1083.5 105.5V108.3M1084.5 101V106.4M1091.5 109.9V112.6M1100.5 111.3V112.9M1106.5 116.9V122.1M1108.5 119.8V122.3M1109.5 118.1V120.4M1111.5 117.1V118.5M1113.5 117.4V119.3M1114.5 115.1V117.4M1121.5 114.1V115.5M1122.5 113.8V115.2M1123.5 113.1V114.5M1125.5 112.4V113.8M1134.5 114.7V116.1M1141.5 113.6V115M1143.5 111.9V113.3M1148.5 110.5V112M1149.5 109V110.5M1155.5 110.1V111.5M1159.5 109.1V111.8M1160.5 105.6V109.1M1161.5 105.5V106.9M1163.5 107.7V109.1M1164.5 107.8V109.2M1165.5 107.1V108.5M1174.5 107.1V108.5M1178.5 109.2V110.6M1180.5 110.2V111.6M1182.5 110.5V111.9M1183.5 109.5V111.3M1196.5 114.6V116M1197.5 113.3V114.8M1200.5 110.7V112.1M1201.5 110.6V112M1206.5 110.5V111.9M1207.5 110.4V111.8M1208.5 110.2V111.6M1209.5 109.6V111M1210.5 108.5V109.9M1214.5 106.8V108.2M1216.5 105.6V107M1217.5 104.8V106.2M1218.5 103.8V105.2M1219.5 102.5V103.9M1220.5 101.4V102.8M1229.5 98V100.5M1230.5 95.4V98.9M1231.5 93.7V95.4M1233.5 96.1V97.5" stroke="#f40000" stroke-width="1" fill="none" shape-rendering="crispEdges"/>
<path d="M12.5 459.1V460.5M13.5 459.6V461M21.5 461.9V463.3M26.5 459.9V461.3M30.5 460.4V461.8M32.5 459.2V460.6M36.5 456.5V457.9M40.5 454.5V455.9M41.5 454.9V456.3M43.5 455.7V457.1M46.5 457V458.4M49.5 458.1V459.5M53.5 458.1V459.5M54.5 458.1V460.7M57.5 458.1V459.5M60.5 457.2V458.6M61.5 456.5V459.3M80.5 464.3V465.9M81.5 464V466.6M82.5 464V466M87.5 463.4V465.7M88.5 461.1V464.3M91.5 458.7V461.4M94.5 456.5V458.8M99.5 451V453.7M106.5 458.6V461M109.5 456.7V459M110.5 457.8V459.2M111.5 458.1V459.5M113.5 458.8V460.2M114.5 459.5V460.9M118.5 462.2V463.6M124.5 461.4V462.8M125.5 461.2V463.4M127.5 460.7V462.1M128.5 460.8V462.1M130.5 462.5V463.9M132.5 464.3V465.7M133.5 464.8V466.2M135.5 465.5V466.9M138.5 467.4V468.8M141.5 468.2V469.6M151.5 464.6V466M154.5 463.6V465M158.5 464V465.4M162.5 463.3V464.7M168.5 464.9V466.3M169.5 464.5V465.9M180.5 467.2V468.6M182.5 467.9V469.3M184.5 469V470.4M196.5 472.2V473.6M199.5 472.7V474.1M202.5 472.1V473.5M203.5 471.8V473.2M206.5 471.1V472.5M214.5 472.7V474.1M217.5 472.8V474.2M219.5 472.8V474.2M221.5 474.2V475.6M224.5 475.9V477.3M226.5 476.3V477.7M228.5 477V478.4M232.5 479.1V480.5M233.5 479.9V481.3M234.5 480.7V482.1M238.5 481.9V483.3M239.5 481.3V482.7M243.5 474.1V475.5M247.5 474.6V476M249.5 473.3V474.7M259.5 478.8V480.2M260.5 478.6V480M262.5 478.7V480.1M264.5 481V482.4M265.5 481.8V483.2M269.5 483.5V484.9M274.5 482.1V483.5M275.5 482.1V483.5M277.5 482.4V483.8M280.5 482.7V484.1M282.5 482.5V483.9M283.5 481.3V483.8M290.5 482V483.4M294.5 484.7V486.1M300.5 486.6V488M305.5 489.4V492.3M306.5 490.3V491.7M315.5 491.2V492.6M317.5 489.4V490.8M322.5 487.5V488.9M329.5 483.8V485.2M333.5 484.9V486.2M338.5 487.7V489.1M341.5 487.5V488.9M342.5 487.2V488.6M345.5 488.8V490.2M349.5 491V492.4M350.5 490.9V494.5M352.5 490.6V492M353.5 489V491.9M356.5 488.5V489.9M361.5 487.4V488.8M374.5 486V487.4M377.5 483.7V485.1M379.5 485.5V486.9M380.5 485V486.4M385.5 481.8V483.2M386.5 481.1V482.5M388.5 479.9V481.3M393.5 481.4V482.8M396.5 480.5V481.9M404.5 485.7V488.4M405.5 485V487.4M410.5 484.1V487.4M411.5 483.5V484.9M416.5 483.1V484.5M420.5 485V486.4M421.5 485.6V487M426.5 487.1V488.5M427.5 487.2V488.6M428.5 487.2V488.6M429.5 487.2V488.6M431.5 486.7V488.1M432.5 486.4V487.8M437.5 483.6V484.9M439.5 483.8V485.1M440.5 481.5V485M442.5 482.8V484.2M444.5 482.1V483.5M447.5 483.1V484.5M448.5 483.8V485.2M471.5 476.1V478.2M484.5 467.8V473.1M522.5 458.4V459.8M524.5 456.8V458.2M525.5 455.9V457.3M530.5 455.9V457.3M532.5 457.5V458.9M533.5 458.3V459.7M537.5 459.1V462.4M542.5 461V462.4M547.5 458.2V459.6M553.5 460.7V462.1M554.5 461.2V462.6M556.5 462.8V464.2M558.5 464.5V465.9M560.5 465.6V467M561.5 466V469.1M562.5 465.9V467.3M563.5 465.2V466.6M576.5 459.1V460.5M578.5 458.7V460.1M584.5 468.8V470.2M586.5 468.6V470M591.5 466.7V468.1M595.5 462.7V464.1M599.5 460.2V463.7M601.5 462.4V463.8M604.5 462.7V464.1M606.5 462.5V463.9M608.5 461.1V462.5M609.5 460.4V461.8M612.5 461.5V462.9M617.5 466.1V467.5M618.5 465.8V467.2M619.5 465.5V466.9M621.5 463.5V466.2M623.5 464.4V465.8M624.5 464.5V465.9M628.5 463.3V466.8M634.5 470.1V471.5M636.5 471.6V473M637.5 470.3V473.6M645.5 468.1V469.5M650.5 466.5V467.9M653.5 467.1V468.5M658.5 467.6V469M670.5 467.6V469M674.5 463.6V465.2M681.5 460.1V461.5M684.5 458.1V460.9M687.5 459.6V462.8M689.5 459.9V461.3M691.5 461.4V466M695.5 459.8V461.2M696.5 459.6V461M705.5 458.2V459.6M711.5 457.6V459M719.5 452.8V455.7M724.5 455.6V457M725.5 456V457.4M727.5 456.9V458.3M739.5 454.3V455.7M745.5 451.5V452.9M747.5 451V452.4M756.5 446.1V447.4M760.5 443.7V446M764.5 438.6V440.8M770.5 440.5V443.6M772.5 441.2V446.1M775.5 442.4V445.9M777.5 442.7V445M778.5 442.9V445.5M779.5 441.8V443.8M783.5 436.5V438.5M809.5 373.1V380.8M842.5 333V338.6M883.5 311.3V314.5M902.5 296.4V299.5M917.5 292.8V295.3M944.5 277.5V283.4M951.5 269.3V275.7M961.5 271.3V272.7M962.5 272V274.8M965.5 276.1V278.1M966.5 277.1V278.5M967.5 276.2V277.6M969.5 274.3V275.7M970.5 273.9V275.3M972.5 274.4V275.8M974.5 275.8V277.2M975.5 276.8V278.2M976.5 277.6V279M979.5 294.7V296.1M982.5 296.4V297.8M983.5 296.3V297.7M987.5 295.3V296.7M988.5 294.8V297.5M989.5 294.4V295.8M991.5 293.5V294.9M994.5 292.1V293.5M999.5 287.2V288.6M1002.5 289.7V291.1M1059.5 344.7V346.8M1072.5 357.6V360.9M1088.5 351.8V354.6M1097.5 357.5V362.5M1114.5 371.3V374.4M1115.5 371.9V376.3M1117.5 373V376.2M1116.5 374V375.5M1117.5 375.5V377M1124.5 381V383M1126.5 375.5V377M1127.5 377.5V379M1130.5 384.5V386M1131.5 384.5V386M1134.5 381.2V382.8M1135.5 381.2V382.8M1138.5 378V379.5M1149.5 375.5V377M1153.5 383.2V384.8M1155.5 381.2V382.8M1160.5 380.2V381.8M1160.5 372.5V380.5M1163.5 375.5V377M1165.5 375.5V377M1176.5 381.2V382.8M1179.5 383.5V385M1180.5 383.5V385M1186.5 376.2V377.8M1189.5 385.2V386.8M1190.5 385.2V386.8M1191.5 385.2V386.8M1192.5 385.2V386.8M1201.5 385.2V386.8M1216.5 381.2V382.8M1217.5 381.2V382.8M1230.5 375.5V377M1231.5 372.5V374M1234.5 356.2V357.8" stroke="#f4ec5a" stroke-width="1" fill="none" shape-rendering="crispEdges"/>
<path d="M17.5 462.1V463.5M77.5 456.7V462.9M78.5 461.3V465.8M79.5 463.2V466.1M84.5 464.4V466.6M97.5 452V456M101.5 452.8V455.6M102.5 454.9V459M104.5 457.7V460.2M105.5 459.3V461.7M117.5 462V463.4M126.5 460.9V462.3M131.5 463.5V464.9M139.5 468.1V469.5M145.5 467.2V469.8M150.5 464.9V466.3M153.5 463.9V465.3M156.5 464.1V465.5M164.5 464.9V466.3M170.5 464.8V466.2M175.5 466.8V468.2M189.5 468.3V469.7M193.5 469.4V470.8M194.5 468.8V472.2M195.5 471.8V473.2M200.5 472.7V474.1M201.5 472.4V473.8M211.5 471.7V473.1M216.5 472.8V474.2M235.5 481.6V484.2M245.5 475V476.4M252.5 473.3V474.7M253.5 474.6V476M254.5 475.8V477.2M257.5 477.9V479.3M258.5 478.5V481.7M261.5 478.3V479.7M263.5 479.9V481.4M267.5 483.2V484.6M272.5 482.8V484.2M281.5 482.6V484M291.5 482.6V484M295.5 485.4V486.8M299.5 486.6V488M304.5 488.5V489.9M309.5 492.4V493.8M319.5 488.2V489.6M337.5 487.1V488.5M343.5 487V488.4M359.5 487.6V489M362.5 487.5V488.9M364.5 487.7V489.1M371.5 487.5V488.9M378.5 484.5V486.2M382.5 483.8V485.2M395.5 480.6V482.8M402.5 483.4V485.8M407.5 486.2V487.6M418.5 484V485.4M419.5 484.5V485.9M422.5 486.2V487.6M423.5 486.7V488.1M434.5 485.3V486.7M445.5 482.3V485.3M453.5 469.2V472.4M454.5 468.7V471.8M462.5 475V477.7M463.5 476.3V479.1M464.5 476.2V480.6M466.5 479.2V482.9M473.5 475.8V479.8M475.5 476.3V478.5M479.5 477V480.6M483.5 469.9V472.9M492.5 457.1V460.1M494.5 458.5V460.8M495.5 459V462M496.5 460.4V463.3M497.5 460.9V463.4M502.5 461.6V464.1M503.5 462.3V465.7M511.5 454.8V456.7M516.5 455.7V462M535.5 460.1V461.5M536.5 460.7V462.1M548.5 458.6V460M550.5 459.4V460.8M551.5 459.9V461.3M572.5 463.8V465.2M573.5 463.3V465M580.5 461V463.1M581.5 463.1V465.2M610.5 460.4V461.8M613.5 462.2V463.6M620.5 465.1V466.5M627.5 464.9V466.3M631.5 467.8V469.2M642.5 470.1V471.5M646.5 467.7V469.1M649.5 466.5V467.9M657.5 467.1V468.5M665.5 469.2V470.6M686.5 459.5V460.9M704.5 458.3V459.7M712.5 458V459.4M716.5 454.7V456.1M718.5 454.2V455.6M723.5 455.1V456.5M726.5 455.5V457.8M732.5 457.4V459.3M742.5 454.1V455.5M743.5 453.2V454.6M767.5 439.4V442.9M789.5 427.6V432.3M790.5 430V435.3M791.5 433.1V440.7M792.5 437.9V450.6M796.5 405.5V413.8M797.5 408.6V413.3M802.5 394.6V401.1M813.5 365.9V368.3M814.5 366.5V371M815.5 368.4V375M816.5 367.7V371.4M827.5 336.4V344M828.5 342.3V349.2M829.5 345.3V355.3M830.5 351.3V357M835.5 337.1V342.3M836.5 339.8V344.9M837.5 339.6V345.8M838.5 340.6V345.7M843.5 335.2V339.5M844.5 337V340M845.5 338V341.6M846.5 340V346.6M847.5 340.7V345.9M849.5 346.5V351.2M856.5 320.6V326.3M857.5 320.3V332.5M861.5 323.1V325.9M862.5 322.2V326.7M863.5 324V329.1M864.5 326.7V332.5M871.5 317.7V321.8M872.5 320V323.4M873.5 321.5V328.4M874.5 322.9V334.7M875.5 330.6V337M887.5 301.4V306.2M890.5 297.5V302.3M891.5 296.7V304.1M892.5 300.8V310.8M895.5 300.3V305.7M896.5 303V309M901.5 292.8V299.9M904.5 293.5V301.6M905.5 292.2V301.5M906.5 297.9V302.2M907.5 300V308M908.5 305.9V312.3M913.5 303.3V307.5M918.5 289.8V295.9M921.5 288.2V291.6M922.5 287.1V295.9M924.5 288.6V293.3M926.5 284.8V290M927.5 285.2V290.4M930.5 278V283M932.5 281.9V284.1M933.5 282.4V289.3M934.5 286.2V294.2M938.5 287.6V290.2M939.5 288.9V292.8M943.5 280.7V284.6M952.5 271.6V277.1M954.5 274.8V279.8M955.5 277.7V281.4M973.5 274.9V276.3M1005.5 292.4V295.6M1010.5 305.2V308.9M1012.5 309.8V314.5M1013.5 312.2V317.9M1016.5 324.8V328.7M1021.5 317.9V323.7M1022.5 321.6V327.6M1023.5 325.9V328.6M1024.5 324.6V327.4M1030.5 321.7V325.3M1034.5 329.9V334.5M1035.5 332V338.1M1036.5 336.1V338.4M1040.5 337.1V340.4M1041.5 336.8V340.4M1047.5 326.5V330.2M1049.5 329.1V335.1M1050.5 333.6V338.5M1053.5 336.4V340.3M1055.5 341.4V346.4M1061.5 345.5V351.2M1069.5 349.8V356.2M1070.5 353.9V359.7M1073.5 359.2V362.1M1080.5 346.6V350.4M1081.5 348.6V351.4M1083.5 352.9V355.7M1089.5 352.5V359.2M1091.5 356.2V362.1M1092.5 360.3V363.7M1104.5 360.3V363.2M1105.5 362.6V364.6M1106.5 362.5V368M1107.5 365.2V371.7M1115.5 373V375M1119.5 380.5V385.5M1121.5 384V388.5M1139.5 375.5V377.5M1148.5 374V375.6M1161.5 369.5V379M1167.5 373.8V375.4M1168.5 378V383.5M1178.5 378V380M1188.5 384.2V385.8M1207.5 383.5V385M1211.5 380.5V387.5M76.5 455.8V467M77.5 458V467M78.5 462V467" stroke="#0a7cf0" stroke-width="1" fill="none" shape-rendering="crispEdges"/>
<path d="M76.5 459.1V460.7M85.5 462.8V467.5M86.5 464.5V467.4M89.5 461.3V463.4M90.5 459.7V462.8M92.5 457.8V460.4M95.5 456.3V459.8M96.5 452.7V456.9M107.5 457.8V460.1M108.5 457.5V460.4M142.5 467.9V469.3M144.5 467.5V468.9M146.5 466.8V469.2M148.5 465.8V467.2M149.5 465.3V466.7M157.5 464.2V465.6M160.5 463.7V465.1M161.5 463.5V464.9M171.5 465.3V466.7M186.5 470.2V471.6M190.5 467.5V468.9M209.5 469.4V472.4M223.5 475.6V477M227.5 476.6V478M231.5 478.5V479.9M237.5 482.5V483.9M244.5 474.3V475.7M250.5 472.7V474.1M255.5 476.6V478M271.5 483.2V484.6M273.5 482.4V483.8M285.5 482.1V484.7M289.5 479.4V482.9M293.5 483V485.3M308.5 491.9V493.3M313.5 492.5V493.9M316.5 490.3V491.7M331.5 483.9V485.2M332.5 484.4V487.9M336.5 484.6V487.9M347.5 490.8V492.2M360.5 487.4V488.8M370.5 487.7V489.1M387.5 480.4V481.8M391.5 481.5V482.9M392.5 481.8V483.2M409.5 484.8V486.2M412.5 483.1V484.5M424.5 487V488.4M430.5 486V488.4M433.5 485.9V487.3M435.5 484.6V486.9M436.5 483.8V485.2M438.5 483.7V485.1M441.5 483.2V484.6M443.5 482.4V483.8M450.5 480.3V487.7M455.5 470.8V472.8M457.5 471.8V475.3M460.5 471.8V477.3M468.5 478.5V482.1M469.5 475.5V480.2M477.5 476.2V479.5M478.5 475.6V479.5M480.5 477.5V481.6M481.5 475V479M482.5 471.6V475.6M488.5 465.2V469.2M490.5 459.1V460.8M491.5 457V460M501.5 461.2V463.8M504.5 459.8V465.8M505.5 456.3V463.8M507.5 454.5V457.8M510.5 453.6V455.9M519.5 458.8V462.3M523.5 457.7V459.1M527.5 454.4V455.8M555.5 462V463.4M564.5 463.1V465.6M565.5 463.3V464.7M566.5 462.4V463.8M568.5 459.7V462.4M574.5 461.6V463.3M588.5 468V469.4M593.5 464.3V465.7M596.5 462.5V463.9M626.5 464.7V466.1M638.5 472.2V473.6M641.5 470.8V472.2M675.5 462.5V463.9M679.5 460.8V462.2M680.5 460.5V461.9M683.5 459.7V461.1M685.5 459.4V460.8M690.5 460.3V461.7M714.5 457.6V459M715.5 456.1V457.6M717.5 454.1V455.5M721.5 454.5V455.9M734.5 458.8V460.5M735.5 457.1V458.8M746.5 451.1V452.5M752.5 448.1V449.5M759.5 445.3V446.7M761.5 439.1V444.8M768.5 441V442.7M771.5 441.4V443.7M776.5 441.7V445.8M781.5 439.3V441.7M784.5 434.7V437.9M787.5 430.2V432.8M794.5 432.3V444.8M795.5 405.5V433.5M798.5 407V414.5M799.5 402.2V410.5M800.5 399V407.2M801.5 396.1V399.9M803.5 399.2V403.4M804.5 395.1V401.7M805.5 388.5V397M806.5 384.5V391.4M807.5 381.5V390.1M808.5 378.2V383.5M810.5 373.1V380.1M811.5 369.7V375.2M812.5 364.4V371.5M817.5 367.4V372.9M818.5 366V371.2M819.5 361V367.9M820.5 354.9V364.2M821.5 352.5V362.8M822.5 349.5V355.4M823.5 345.6V351.3M824.5 341.9V348.3M825.5 338.1V345.2M826.5 334V341.3M831.5 341.7V355.3M832.5 339.3V347.3M833.5 335.1V341.6M834.5 335.1V338.9M839.5 342.5V346M840.5 339.1V347.5M841.5 334.3V342.5M848.5 344.1V351.5M850.5 340.8V348.8M851.5 334.9V343M852.5 330.9V340.3M853.5 326.9V334.5M854.5 321.8V329.5M855.5 320.8V327.8M858.5 328V332M859.5 325.6V329.6M860.5 322.1V326.8M865.5 327.5V330.9M866.5 326.2V329.1M867.5 325V330.1M868.5 321.2V327.4M869.5 319.2V325.6M870.5 319.4V321.2M876.5 328.5V338.8M877.5 319.5V330.8M878.5 317.5V323.7M879.5 314.8V322.4M880.5 311.3V316.6M881.5 311.3V316.8M882.5 311.9V315.1M884.5 305.6V313.1M885.5 302.7V310.5M886.5 300.9V307.3M888.5 298.5V306M889.5 299.9V303M893.5 302.7V307.5M894.5 298.6V304.7M897.5 301.3V306M898.5 301.3V306.1M899.5 295.9V302.3M900.5 296.8V301.4M903.5 296.7V299.8M909.5 311.8V316.3M910.5 309.3V315.8M911.5 306.2V313.7M912.5 303.9V308M914.5 301.3V306.4M915.5 293V304.7M916.5 292.2V299.6M919.5 290.2V298.2M920.5 288.4V292.5M923.5 288.6V293.8M925.5 286.7V291.9M928.5 279.2V287.8M929.5 278.2V283.8M931.5 279.2V285.1M935.5 290.2V293.2M936.5 286.2V294.3M937.5 285.6V288.6M940.5 288V292.9M941.5 284V290.7M942.5 282.5V285.8M945.5 276.9V280.4M946.5 273.7V279.2M947.5 275V279M948.5 272.2V275.6M949.5 272.2V276.5M950.5 269.8V277.9M953.5 273.2V277.6M956.5 277.5V281.1M957.5 277.6V280.9M958.5 271.8V282.5M959.5 271.1V275.8M985.5 294.4V297.5M1017.5 322.8V327.2M1018.5 320.3V324.2M1025.5 324.1V326.8M1028.5 320.9V326.1M1043.5 331.1V336.5M1045.5 326V331.7M1052.5 337V340.6M1054.5 338.3V344.6M1058.5 345.2V348.4M1063.5 347.9V351.9M1065.5 345.2V349.9M1074.5 359.8V363M1075.5 361.1V364.4M1077.5 350.9V356.8M1078.5 346V352.3M1086.5 352.1V355M1094.5 360.2V363.5M1095.5 358.6V361.7M1096.5 358.6V360.5M1098.5 357.1V360.4M1099.5 356.4V359.6M1110.5 367.8V372M1112.5 370.4V372M1113.5 371.2V374.4M1111.5 369.5V371.5M1120.5 384V387M1122.5 383V387M1136.5 379.2V380.8M1140.5 376.2V377.8M1144.5 377V380.5M1145.5 377V380.5M1147.5 373V376.5M1152.5 375.5V380.5M1156.5 377.5V381M1157.5 377.5V380M1183.5 375.5V383.5M1184.5 375.5V383.5M1206.5 379.5V381.5" stroke="#f40000" stroke-width="1" fill="none" shape-rendering="crispEdges"/>
<polyline points="8.5,644.2 10.8,641.9 13,648 16.2,649.6 19.2,652.7 21.5,645 23,641.9 26.2,647.3 31.5,647.3 33.8,644.2 36.2,641.2 40,645.8 46.2,645.8 50.5,639.6 55.4,640.8 58.5,642.7 63,642.7 66.2,645.8 70.8,644.2 73.8,642.7 76.2,643.5 77.7,637.3 80.8,639.6 83,635.8 87,636.2 89.2,641.9 91.5,638.8 94.6,644.2 97.7,642.4 100.8,645.8 104.6,641.2 107.7,638.8 110.8,642.7 115.4,643.5 118.5,637.3 122.3,636.5 124.6,641.2 126.2,636.5 129.2,644.2 131.5,635.8 135.4,635.8 137.7,640.4 139.7,635 143.8,637.3 149.2,637.8 151.5,642.7 154.6,639.6 157.7,640.4 160.8,648 164.6,648.8 167.7,645 170,649.2 172.3,645 175.4,647.3 178.5,641.9 182.3,645 185.4,642.7 187.7,633.5 190,636.5 192.3,642.7 194.6,640.4 197.4,634.2 200,637.3 204.6,632.7 207,638.8 211.5,639.6 215.4,640.4 219.2,637.3 221.5,640.4 225.4,637.3 228.5,636.5 231.5,639.6 235.4,636.5 238.5,633.5 242.3,635 244.6,637.8 249.2,633.5 253,638 255.4,639.6 260.8,635.8 265.4,639.6 267.7,634.2 275.4,634.2 278.5,631.2 281.5,630 285.4,630.4 289.2,633.8 295.4,634.2 297.7,630.4 301.5,630.4 303.8,634.7 307,634.2 309,631.6 311.5,634.7 314.6,633.5 317.7,630.4 319.2,634.7 323,635.8 327,635.8 330.8,640.4 337,639.6 339.2,635 343.8,635.3 345.4,640.4 347.7,639.6 350,635.8 353.8,633.5 358.5,635 361.5,637.8 364.6,635.3 370.8,635.3 373.8,637.8 378.5,639.3 382.3,635.8 387,639.3 390.8,639.9 393,636.5 395.4,640.4 398.5,635.8 400,640.4 403,632 407,632.7 410.8,630.4 413,637.3 415.4,640.4 423,640.4 429.2,639.9 432.3,636.5 435.4,635.8 439.2,640.4 443,639.6 445.4,642.7 448.5,636.5 450.8,631.2 453,642.7 455.4,645.8 457.7,641.2 460.8,644.2 463.8,639.6 465.8,633.5 467.7,635 470,633.5 472.3,638.8 475,644.5 478.5,641.9 481.5,637.3 483.8,640.4 486.2,638.8 489.2,643.5 490.8,659.6 493.8,655.3 496.2,648.5 499.2,643.5 502.3,650.4 505.4,646.5 507.7,651.2 509.2,656.2 512.3,651.2 517,651.6 519.2,646.5 521.5,645.8 523.8,648 530,655.3 533.8,648.5 537.7,643.5 541.5,641.2 544.6,638 547,645.5 549.2,645.8 552.3,640.4 556.2,638.4 560,628.5 562.3,634.2 566.2,634.2 569.2,638.8 573,645 574.6,641.2 576.2,645.8 580.8,645.5 583,632 587,631.2 591.5,631.6 593.8,635.8 596.2,644.2 600,642.3 604.6,640 608.5,635.4 610.8,640.5 616.2,640.5 621.5,635 625.4,640.8 631.5,635.4 637,635.4 638.5,630.8 640.8,632.3 643.8,630 646.2,635.4 649.2,636.2 652.3,643.8 654.6,641.5 657.7,649.7 660.8,646.9 662.8,649.2 664.3,641.5 667.7,640.8 672.3,641.5 676.2,647.7 678.5,638.5 680,643 683.8,645.4 689.2,644.6 693,640 696.2,643.8 700,647.2 706.2,646.6 711.5,649.2 714.6,646.2 717.7,648.5 720.8,652.8 725.4,641.5 729.2,642.3 733.8,642 735.7,634.6 737.7,631.5 739.2,642.3 741.5,637 747,644.2 753,644.6 756.2,650.3 760.8,647.7 763,660 767,658.5 770.8,654.6 773.8,647.7 777.7,646.2 781.5,650 786.2,656.2 788.5,655.4 792,664.4 794,645 795.5,638.9 797.1,608.7 799.1,598.6 801.1,582.4 804.2,577.4 806.2,580.4 808.6,564.3 810.8,578.4 813.2,598.6 816.3,621.8 818.3,608.7 821.9,602.6 824.3,616.7 827.4,595.5 831,589.5 834.4,608.7 837.8,599.6 841.5,588.5 845.5,593.5 847.1,598.6 849.5,583.4 853.2,601.6 856,584.5 859.2,573.4 861.2,575.4 864.1,542.1 865.7,544.1 868.7,563.3 870.7,555.2 872.7,563.3 875.4,540.1 877.4,538.1 879.8,550.2 882.2,561.3 884.2,566.3 886.5,584.5 889.9,585.5 892.9,584.5 894.9,595.5 897.9,591 899.3,596.7 901.5,594.6 905.1,601.8 908,601.8 909.4,591 910.6,578.7 912.3,593.9 914.5,588.1 915.9,585.9 917.3,598.2 919.5,593.1 921.7,611.2 924.5,601.8 927.4,609 929.6,617.6 932.5,624.8 935.3,624.8 937.5,622.7 938.9,630.6 940.8,627.7 943.3,632 945.4,642.9 949,645.7 951.2,645 952.6,636.4 955.5,632 957.7,630.6 959.8,639.3 962.7,644.3 965.6,629.2 968.5,627 970.6,629.9 973.5,624.1 976.4,616.2 978.6,609 980.3,596 985.1,596 987.9,604 990.8,598.9 994.4,603.2 998,606.8 1000.2,614 1002.3,615.5 1005.2,611.9 1007.2,608.5 1008.6,597.7 1010.8,594.8 1013.6,583.3 1016.2,570.3 1019.4,573.2 1020.9,586.9 1023.7,576.1 1026.6,579 1028.8,581.2 1030.9,579 1032.1,581.2 1034.5,573.2 1037.4,568.9 1039.6,559.5 1043.9,559.5 1046.1,573.2 1048.2,574 1051.1,569.6 1053.3,567.8 1055.4,572.5 1057.6,567.2 1060.5,571.1 1063.1,577.6 1065.1,567.8 1067,571.8 1070.6,568.9 1073.4,576.1 1074.9,582.6 1077.8,579.7 1079.2,584.8 1081.4,585.5 1083.5,589.1 1085.7,573.9 1087.9,580.4 1090.7,584.8 1093.6,581.2 1095.5,587.6 1097.9,579 1100.8,589.1 1103.3,584 1107,597 1110.2,583.3 1113.8,587.6 1115.7,571.5 1119,569.4 1120.2,555.6 1122.1,559.6 1124.8,557.9 1126.5,567.7 1128.6,571.7 1130.6,564.8 1133.5,562.1 1136.3,563.1 1138.6,568.8 1140.9,569.4 1144.4,563.6 1146.7,565.9 1148.2,570 1150.2,562.5 1152.5,560.7 1154.4,552.7 1157.1,556.7 1159,563.1 1161.1,550.4 1162.9,554.4 1164.4,559.6 1166.3,556.7 1168.6,554.4 1169.4,546.3 1171.5,544 1174.4,546.9 1176.7,548.1 1179,552.7 1181.3,554.4 1183.6,554.4 1184.8,561.9 1186.3,565.1 1188.2,564.8 1189.4,554.4 1191.1,552.7 1194,556.1 1196.3,559.6 1198,556.7 1200.3,549.8 1205.5,549.4 1207.2,556.7 1209,552.7 1210.7,550.4 1212.4,542.9 1215.3,542.3 1217.1,540.6 1218.8,544.6 1220.5,537.7 1223.4,535.6 1226.3,536 1229.2,534.2 1230.9,544.6 1232.6,537.1 1234,543.5 1234.9,559.6" stroke="#ff0000" stroke-width="2" fill="none" stroke-linejoin="miter" shape-rendering="crispEdges"/>
<g class="t">
<text class="n" transform="translate(1237.5 58.5) scale(0.77 1)">6,800</text>
<text class="n" transform="translate(1237.5 147.5) scale(0.77 1)">6,700</text>
<text class="n" transform="translate(1237.5 191.5) scale(0.77 1)">6,650</text>
<text class="n" transform="translate(1237.5 235.5) scale(0.77 1)">6,600</text>
<rect x="1237" y="86" width="59" height="22" fill="#d6d6d6"/>
<text class="mk" transform="translate(1250.5 100) scale(0.77 1)">6,760</text>
<text class="n" transform="translate(33.5 248) scale(0.77 1)">05</text>
<text class="n" transform="translate(92.5 248) scale(0.77 1)">09</text>
<text class="n" transform="translate(153.5 248) scale(0.77 1)">10</text>
<text class="n" transform="translate(215.5 248) scale(0.77 1)">11</text>
<text class="n" transform="translate(272.5 248) scale(0.77 1)">12</text>
<text class="n" transform="translate(329.5 248) scale(0.77 1)">13</text>
<text class="n" transform="translate(383.5 248) scale(0.77 1)">14</text>
<text class="n" transform="translate(423.5 248) scale(0.77 1)">15</text>
<text class="n" transform="translate(451.5 248) scale(0.77 1)">16</text>
<text class="n" transform="translate(482.5 248) scale(0.77 1)">17</text>
<text class="n" transform="translate(539.5 248) scale(0.77 1)">18</text>
<text class="n" transform="translate(592.5 248) scale(0.77 1)">19</text>
<text class="n" transform="translate(644.5 248) scale(0.77 1)">20</text>
<text class="n" transform="translate(706.5 248) scale(0.77 1)">21</text>
<text class="n" transform="translate(762.5 248) scale(0.77 1)">22</text>
<text class="n" transform="translate(824.5 248) scale(0.77 1)">23</text>
<text class="n" transform="translate(885.5 248) scale(0.77 1)">00</text>
<text class="n" transform="translate(946.5 248) scale(0.77 1)">01</text>
<text class="n" transform="translate(1008.5 248) scale(0.77 1)">02</text>
<text class="n" transform="translate(1067.5 248) scale(0.77 1)">03</text>
<text class="n" transform="translate(1126.5 248) scale(0.77 1)">04</text>
<text class="n" transform="translate(1184.5 248) scale(0.77 1)">05</text>
<text class="n" transform="translate(1218 248) scale(0.77 1)">06</text>
<text class="n b" transform="translate(58.5 248) scale(0.77 1)">06</text>
<text class="n" transform="translate(887.5 233.5) scale(0.77 1)">11</text>
<text class="n" transform="translate(1237.5 306.5) scale(0.77 1)">3,950</text>
<text class="n" transform="translate(1237.5 372.5) scale(0.77 1)">3,900</text>
<text class="n" transform="translate(1237.5 438.5) scale(0.77 1)">3,850</text>
<text class="n" transform="translate(1237.5 503.5) scale(0.77 1)">3,800</text>
<rect x="1237" y="347" width="59" height="21" fill="#d6d6d6"/>
<text class="mk" transform="translate(1250.5 361) scale(0.77 1)">3,914</text>
<text class="n" transform="translate(33.5 516) scale(0.77 1)">05</text>
<text class="n" transform="translate(92.5 516) scale(0.77 1)">09</text>
<text class="n" transform="translate(153.5 516) scale(0.77 1)">10</text>
<text class="n" transform="translate(215.5 516) scale(0.77 1)">11</text>
<text class="n" transform="translate(272.5 516) scale(0.77 1)">12</text>
<text class="n" transform="translate(329.5 516) scale(0.77 1)">13</text>
<text class="n" transform="translate(383.5 516) scale(0.77 1)">14</text>
<text class="n" transform="translate(423.5 516) scale(0.77 1)">15</text>
<text class="n" transform="translate(451.5 516) scale(0.77 1)">16</text>
<text class="n" transform="translate(482.5 516) scale(0.77 1)">17</text>
<text class="n" transform="translate(539.5 516) scale(0.77 1)">18</text>
<text class="n" transform="translate(592.5 516) scale(0.77 1)">19</text>
<text class="n" transform="translate(644.5 516) scale(0.77 1)">20</text>
<text class="n" transform="translate(706.5 516) scale(0.77 1)">21</text>
<text class="n" transform="translate(762.5 516) scale(0.77 1)">22</text>
<text class="n" transform="translate(824.5 516) scale(0.77 1)">23</text>
<text class="n" transform="translate(885.5 516) scale(0.77 1)">00</text>
<text class="n" transform="translate(946.5 516) scale(0.77 1)">01</text>
<text class="n" transform="translate(1008.5 516) scale(0.77 1)">02</text>
<text class="n" transform="translate(1067.5 516) scale(0.77 1)">03</text>
<text class="n" transform="translate(1126.5 516) scale(0.77 1)">04</text>
<text class="n" transform="translate(1184.5 516) scale(0.77 1)">05</text>
<text class="n" transform="translate(1218 516) scale(0.77 1)">06</text>
<text class="n b" transform="translate(58.5 516) scale(0.77 1)">06</text>
<text class="n" transform="translate(887.5 501.5) scale(0.77 1)">11</text>
<text class="n" transform="translate(1237.5 551.5) scale(0.77 1)">2,850</text>
<text class="n" transform="translate(1237.5 592.5) scale(0.77 1)">2,825</text>
<text class="n" transform="translate(1237.5 634.5) scale(0.77 1)">2,800</text>
<text class="n" transform="translate(1237.5 676.5) scale(0.77 1)">2,775</text>
<rect x="1237" y="550" width="59" height="22" fill="#d6d6d6"/>
<text class="mk" transform="translate(1250.5 564) scale(0.77 1)">2,846</text>
<text class="n" transform="translate(33.5 682) scale(0.77 1)">05</text>
<text class="n" transform="translate(92.5 682) scale(0.77 1)">09</text>
<text class="n" transform="translate(153.5 682) scale(0.77 1)">10</text>
<text class="n" transform="translate(215.5 682) scale(0.77 1)">11</text>
<text class="n" transform="translate(272.5 682) scale(0.77 1)">12</text>
<text class="n" transform="translate(329.5 682) scale(0.77 1)">13</text>
<text class="n" transform="translate(383.5 682) scale(0.77 1)">14</text>
<text class="n" transform="translate(423.5 682) scale(0.77 1)">15</text>
<text class="n" transform="translate(451.5 682) scale(0.77 1)">16</text>
<text class="n" transform="translate(482.5 682) scale(0.77 1)">17</text>
<text class="n" transform="translate(539.5 682) scale(0.77 1)">18</text>
<text class="n" transform="translate(592.5 682) scale(0.77 1)">19</text>
<text class="n" transform="translate(644.5 682) scale(0.77 1)">20</text>
<text class="n" transform="translate(706.5 682) scale(0.77 1)">21</text>
<text class="n" transform="translate(762.5 682) scale(0.77 1)">22</text>
<text class="n" transform="translate(824.5 682) scale(0.77 1)">23</text>
<text class="n" transform="translate(885.5 682) scale(0.77 1)">00</text>
<text class="n" transform="translate(946.5 682) scale(0.77 1)">01</text>
<text class="n" transform="translate(1008.5 682) scale(0.77 1)">02</text>
<text class="n" transform="translate(1067.5 682) scale(0.77 1)">03</text>
<text class="n" transform="translate(1126.5 682) scale(0.77 1)">04</text>
<text class="n" transform="translate(1184.5 682) scale(0.77 1)">05</text>
<text class="n" transform="translate(1218 682) scale(0.77 1)">06</text>
<text class="n b" transform="translate(58.5 682) scale(0.77 1)">06</text>
<text class="n" transform="translate(887.5 667.5) scale(0.77 1)">11</text>
<text class="j" x="8" y="61.5">時刻</text>
<text class="n" transform="translate(32 61.5) scale(0.77 1)">:06:00</text>
<text class="j" x="76" y="61.5">始値</text>
<text class="n" transform="translate(100 61.5) scale(0.77 1)">:6,760</text>
<text class="j" x="144" y="61.5">高値</text>
<text class="n" transform="translate(168 61.5) scale(0.77 1)">:6,760</text>
<text class="j" x="212" y="61.5">安値</text>
<text class="n" transform="translate(236 61.5) scale(0.77 1)">:6,760</text>
<text class="j" x="280" y="61.5">終値</text>
<text class="n" transform="translate(304 61.5) scale(0.77 1)">:6,760</text>
<text class="j" x="8" y="272">時刻</text>
<text class="n" transform="translate(32 272) scale(0.77 1)">:06:00</text>
<text class="j" x="76" y="272">始値</text>
<text class="n" transform="translate(100 272) scale(0.77 1)">:3,914</text>
<text class="j" x="144" y="272">高値</text>
<text class="n" transform="translate(168 272) scale(0.77 1)">:3,914</text>
<text class="j" x="212" y="272">安値</text>
<text class="n" transform="translate(236 272) scale(0.77 1)">:3,914</text>
<text class="j" x="280" y="272">終値</text>
<text class="n" transform="translate(304 272) scale(0.77 1)">:3,914</text>
<text class="n" transform="translate(8 539.5) scale(0.77 1)">[</text>
<text class="j" x="14" y="539.5">金</text>
<text class="n" transform="translate(32 539.5) scale(0.77 1)">22/10 6,760</text>
<text class="x" x="99.5" y="539.5">×</text>
<text class="n" transform="translate(112 539.5) scale(0.77 1)">1.00]</text>
<text class="n" transform="translate(145 539.5) scale(0.77 1)">-</text>
<text class="n" transform="translate(154 539.5) scale(0.77 1)">[</text>
<text class="j" x="162" y="539.5">白金</text>
<text class="n" transform="translate(192 539.5) scale(0.77 1)">22/10</text>
<text class="n" transform="translate(230 539.5) scale(0.77 1)">3,914</text>
<text class="x" x="261.5" y="539.5">×</text>
<text class="n" transform="translate(272 539.5) scale(0.77 1)">1.00]</text>
<text class="j" x="310" y="539.5">終値</text>
<text class="j" x="340" y="539.5">時刻</text>
<text class="n" transform="translate(364 539.5) scale(0.77 1)">:06:00</text>
<text class="n" transform="translate(409 539.5) scale(0.77 1)">2,846</text>
</g>
</svg>
</body>
</html>
